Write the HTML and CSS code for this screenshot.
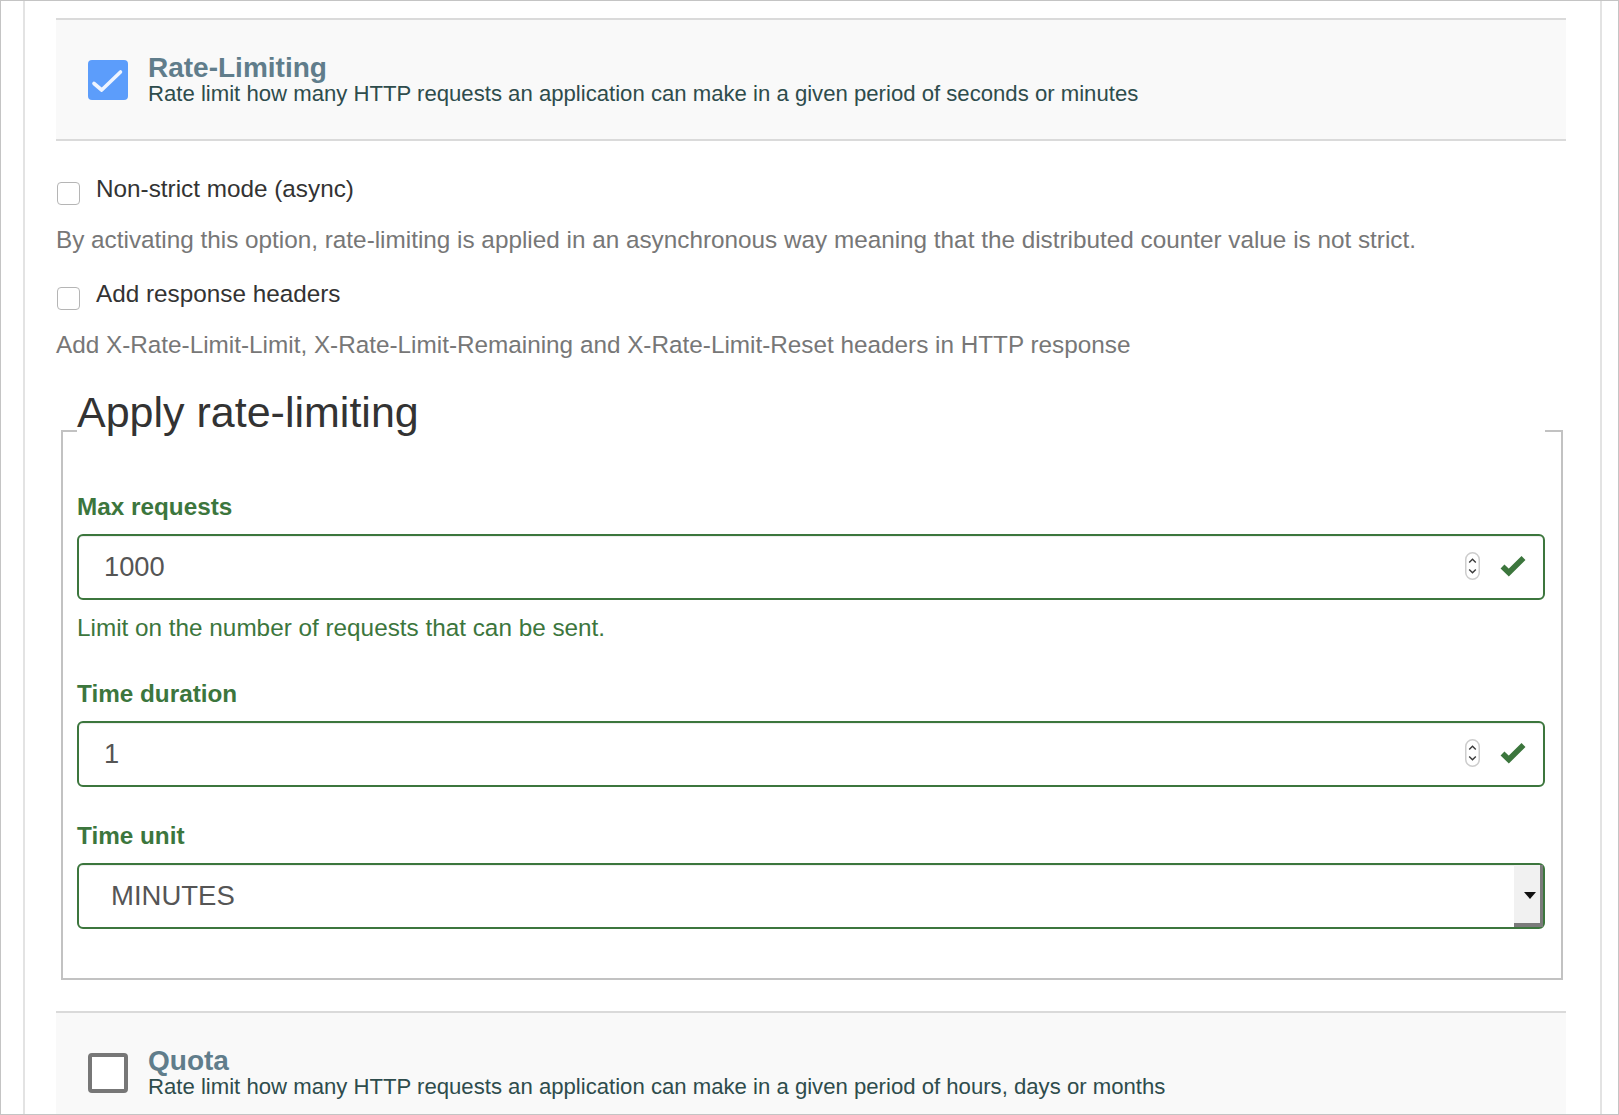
FILE: index.html
```html
<!DOCTYPE html>
<html lang="en">
<head>
<meta charset="utf-8">
<title>Rate-Limiting policy</title>
<link rel="stylesheet" href="styles.css">
</head>
<body>
<div class="frame">
  <div class="panel">
    <section class="policy-head">
      <span class="big-check checked">
        <svg width="40" height="40" viewBox="0 0 40 40"><polyline points="6,23.5 13.7,30 32.5,12" fill="none" stroke="#eef4ff" stroke-width="3.6" stroke-linecap="round" stroke-linejoin="round"/></svg>
      </span>
      <div class="head-text">
        <div class="head-title">Rate-Limiting</div>
        <div class="head-sub">Rate limit how many HTTP requests an application can make in a given period of seconds or minutes</div>
      </div>
    </section>

    <div class="opt-row"><span class="small-check"></span><span class="opt-label">Non-strict mode (async)</span></div>
    <p class="desc">By activating this option, rate-limiting is applied in an asynchronous way meaning that the distributed counter value is not strict.</p>
    <div class="opt-row second"><span class="small-check"></span><span class="opt-label">Add response headers</span></div>
    <p class="desc">Add X-Rate-Limit-Limit, X-Rate-Limit-Remaining and X-Rate-Limit-Reset headers in HTTP response</p>

    <fieldset class="group">
      <legend>Apply rate-limiting</legend>

      <div class="field with-help">
        <label class="field-label">Max requests</label>
        <div class="control">
          <input class="control-input" type="text" value="1000">
          <svg class="spinner" width="15" height="28" viewBox="0 0 15 28"><rect x="0.75" y="0.75" width="13.5" height="26.5" rx="6.75" fill="#fff" stroke="#cdcdcd" stroke-width="1.5"/><path d="M4.2 10.5 L7.5 7.2 L10.8 10.5" fill="none" stroke="#3a3a3a" stroke-width="1.4"/><path d="M4.2 17.5 L7.5 20.8 L10.8 17.5" fill="none" stroke="#3a3a3a" stroke-width="1.4"/></svg>
          <svg class="ok" width="26" height="22" viewBox="0 0 26 22"><polyline points="2.5,11.5 8.8,17.5 23.5,3" fill="none" stroke="#3c763d" stroke-width="5.6" stroke-linejoin="miter"/></svg>
        </div>
        <p class="help">Limit on the number of requests that can be sent.</p>
      </div>

      <div class="field">
        <label class="field-label">Time duration</label>
        <div class="control">
          <input class="control-input" type="text" value="1">
          <svg class="spinner" width="15" height="28" viewBox="0 0 15 28"><rect x="0.75" y="0.75" width="13.5" height="26.5" rx="6.75" fill="#fff" stroke="#cdcdcd" stroke-width="1.5"/><path d="M4.2 10.5 L7.5 7.2 L10.8 10.5" fill="none" stroke="#3a3a3a" stroke-width="1.4"/><path d="M4.2 17.5 L7.5 20.8 L10.8 17.5" fill="none" stroke="#3a3a3a" stroke-width="1.4"/></svg>
          <svg class="ok" width="26" height="22" viewBox="0 0 26 22"><polyline points="2.5,11.5 8.8,17.5 23.5,3" fill="none" stroke="#3c763d" stroke-width="5.6" stroke-linejoin="miter"/></svg>
        </div>
      </div>

      <div class="field last">
        <label class="field-label">Time unit</label>
        <div class="control select">
          <span class="select-value">MINUTES</span>
          <span class="select-btn"><span class="arrow"></span></span>
        </div>
      </div>
    </fieldset>

    <section class="policy-head quota">
      <span class="big-check unchecked"></span>
      <div class="head-text">
        <div class="head-title">Quota</div>
        <div class="head-sub">Rate limit how many HTTP requests an application can make in a given period of hours, days or months</div>
      </div>
    </section>
  </div>
</div>
</body>
</html>
```

FILE: styles.css
```css
html, body {
  margin: 0;
  padding: 0;
  background: #fff;
}

body {
  font-family: "Liberation Sans", Arial, Helvetica, sans-serif;
}

.frame {
  width: 1619px;
  height: 1115px;
  box-sizing: border-box;
  border: 1px solid #c4c4c4;
  overflow: hidden;
}

.panel {
  margin-left: 22px;
  width: 1579px;
  height: 100%;
  box-sizing: border-box;
  border-left: 2px solid #e3e3e3;
  border-right: 2px solid #e3e3e3;
  padding: 17px 34px 0 31px;
}

/* policy header blocks */
.policy-head {
  display: flex;
  align-items: center;
  background: #f9f9f9;
  border-top: 2px solid #dadada;
  border-bottom: 2px solid #dadada;
  padding: 40px 0 39px 32px;
}

.policy-head.quota {
  margin-top: 31px;
}

.big-check {
  flex: none;
  width: 40px;
  height: 40px;
  box-sizing: border-box;
  border-radius: 4px;
  margin-right: 20px;
  display: flex;
}

.big-check.checked {
  background: #5c9dfb;
}

.big-check.unchecked {
  background: #fff;
  border: 4px solid #777;
}

.head-text {
  height: 40px;
  display: flex;
  flex-direction: column;
  justify-content: center;
}

.head-title {
  font-size: 28px;
  line-height: 28px;
  font-weight: bold;
  color: #607d8b;
}

.head-sub {
  font-size: 22.15px;
  line-height: 24px;
  color: #2e4c4c;
  white-space: nowrap;
}

/* options */
.opt-row {
  display: flex;
  align-items: flex-start;
  margin-top: 34px;
}

.opt-row.second {
  margin-top: 26px;
}

.small-check {
  flex: none;
  width: 23px;
  height: 23px;
  box-sizing: border-box;
  border: 1px solid #b5b5b5;
  border-radius: 4px;
  background: #fff;
  margin: 7px 16px 0 1px;
}

.opt-label {
  font-size: 24.3px;
  line-height: 28px;
  color: #333;
}

.desc {
  margin: 21px 0 0;
  font-size: 24.3px;
  line-height: 28px;
  color: #777;
}

/* fieldset */
.group {
  margin: 28px 3px 0 5px;
  border: 2px solid #c2c2c2;
  padding: 18px 16px 49px 14px;
  min-width: 0;
}

.group legend {
  width: 100%;
  box-sizing: border-box;
  padding: 0 0 38px;
  font-size: 43px;
  line-height: 50px;
  color: #333;
}

.field {
  margin-bottom: 35px;
}

.field.with-help {
  margin-bottom: 38px;
}

.field.last {
  margin-bottom: 0;
}

.field-label {
  display: block;
  font-size: 24.3px;
  line-height: 28px;
  font-weight: bold;
  color: #3c763d;
  margin-bottom: 13px;
}

.control {
  display: flex;
  align-items: center;
  height: 66px;
  box-sizing: border-box;
  border: 2px solid #3c763d;
  border-radius: 6px;
  background: #fff;
  box-shadow: inset 0 1px 1px rgba(0, 0, 0, 0.075);
}

.control-input {
  flex: 1;
  min-width: 0;
  height: 100%;
  border: 0;
  outline: 0;
  background: transparent;
  padding: 0 0 0 25px;
  font-family: "Liberation Sans", Arial, sans-serif;
  font-size: 27.3px;
  color: #555;
}

.spinner {
  flex: none;
  margin-right: 20px;
  margin-top: -3px;
}

.ok {
  flex: none;
  margin-right: 17px;
  margin-top: -2px;
}

.help {
  margin: 14px 0 0;
  font-size: 24.3px;
  line-height: 28px;
  color: #3c763d;
}

.control.select {
  padding-left: 32px;
  align-items: stretch;
}

.select-value {
  flex: 1;
  display: flex;
  align-items: center;
  font-size: 27.5px;
  color: #555;
}

.select-btn {
  flex: none;
  width: 29px;
  box-sizing: border-box;
  background: #f1f1f1;
  border-right: 3px solid #7b7b7b;
  border-bottom: 4px solid #7b7b7b;
  display: flex;
  align-items: center;
  justify-content: center;
  padding: 3px 0 0 5px;
}

.arrow {
  width: 0;
  height: 0;
  border-top: 7px solid #111;
  border-left: 6px solid transparent;
  border-right: 6px solid transparent;
}
```
